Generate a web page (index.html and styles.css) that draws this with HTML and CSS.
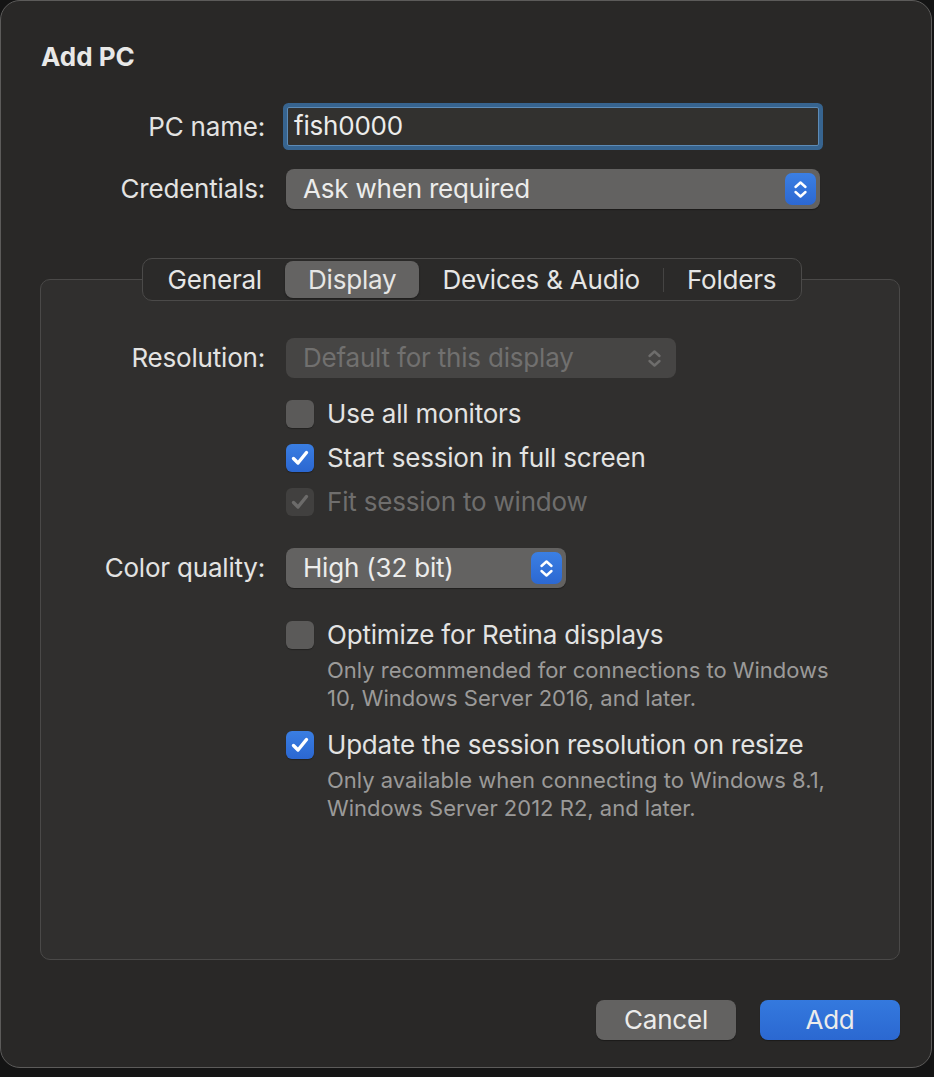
FILE: index.html
```html
<!DOCTYPE html>
<html lang="en">
<head>
  <meta charset="UTF-8">
  <meta name="viewport" content="width=device-width, initial-scale=1.0">
  <title>Add PC</title>
  <link rel="stylesheet" href="styles.css">
</head>
<body>
  <div class="window">
    <h1 class="title">Add PC</h1>

    <div class="top-form">
      <div class="row">
        <label class="row-label">PC name:</label>
        <div class="text-field">fish0000</div>
      </div>
      <div class="row">
        <label class="row-label">Credentials:</label>
        <div class="popup popup-credentials">
          <span>Ask when required</span>
          <span class="stepper">
            <svg width="31" height="31" viewBox="0 0 31 31"><path d="M10.5 13 L15.5 8.5 L20.5 13 M10.5 18 L15.5 22.5 L20.5 18" fill="none" stroke="#fff" stroke-width="2.4" stroke-linecap="round" stroke-linejoin="round"/></svg>
          </span>
        </div>
      </div>
    </div>

    <div class="tabs">
      <div class="segmented">
        <span class="segment">General</span>
        <span class="segment selected">Display</span>
        <span class="segment">Devices &amp; Audio</span>
        <span class="divider"></span>
        <span class="segment">Folders</span>
      </div>
    </div>

    <div class="tab-box">
      <div class="row">
        <label class="row-label">Resolution:</label>
        <div class="popup popup-resolution disabled">
          <span>Default for this display</span>
          <span class="stepper plain">
            <svg width="31" height="31" viewBox="0 0 31 31"><path d="M10.5 13 L15.5 8.5 L20.5 13 M10.5 18 L15.5 22.5 L20.5 18" fill="none" stroke="#6e6d6c" stroke-width="2.4" stroke-linecap="round" stroke-linejoin="round"/></svg>
          </span>
        </div>
      </div>

      <div class="check-group">
        <div class="check-row">
          <span class="checkbox"></span>
          <span>Use all monitors</span>
        </div>
        <div class="check-row">
          <span class="checkbox checked">
            <svg width="28" height="28" viewBox="0 0 28 28"><path d="M7.5 14.5 L12 19 L20.5 8.5" fill="none" stroke="#fff" stroke-width="3.4" stroke-linecap="round" stroke-linejoin="round"/></svg>
          </span>
          <span>Start session in full screen</span>
        </div>
        <div class="check-row disabled">
          <span class="checkbox checked-disabled">
            <svg width="28" height="28" viewBox="0 0 28 28"><path d="M7.5 14.5 L12 19 L20.5 8.5" fill="none" stroke="#6c6b6a" stroke-width="3.4" stroke-linecap="round" stroke-linejoin="round"/></svg>
          </span>
          <span>Fit session to window</span>
        </div>
      </div>

      <div class="row row-color">
        <label class="row-label">Color quality:</label>
        <div class="popup popup-color">
          <span>High (32 bit)</span>
          <span class="stepper">
            <svg width="31" height="31" viewBox="0 0 31 31"><path d="M10.5 13 L15.5 8.5 L20.5 13 M10.5 18 L15.5 22.5 L20.5 18" fill="none" stroke="#fff" stroke-width="2.4" stroke-linecap="round" stroke-linejoin="round"/></svg>
          </span>
        </div>
      </div>

      <div class="option">
        <div class="check-row">
          <span class="checkbox"></span>
          <span>Optimize for Retina displays</span>
        </div>
        <p class="option-note">Only recommended for connections to Windows<br>10, Windows Server 2016, and later.</p>
      </div>

      <div class="option option-update">
        <div class="check-row">
          <span class="checkbox checked">
            <svg width="28" height="28" viewBox="0 0 28 28"><path d="M7.5 14.5 L12 19 L20.5 8.5" fill="none" stroke="#fff" stroke-width="3.4" stroke-linecap="round" stroke-linejoin="round"/></svg>
          </span>
          <span>Update the session resolution on resize</span>
        </div>
        <p class="option-note">Only available when connecting to Windows 8.1,<br>Windows Server 2012 R2, and later.</p>
      </div>
    </div>

    <div class="buttons">
      <button class="button">Cancel</button>
      <button class="button primary">Add</button>
    </div>
  </div>
</body>
</html>
```

FILE: styles.css
```css
body {
  margin: 0;
  background-color: #141414;
  font-family: Inter, "Liberation Sans", Arial, sans-serif;
  font-size: 26px;
  letter-spacing: -0.2px;
  color: #e3e3e2;
}
.window {
  box-sizing: border-box;
  width: 932px;
  height: 1068px;
  padding-top: 41px;
  background-color: #292827;
  border: 1px solid #5c5b5a;
  border-radius: 20px;
}
.title {
  margin: 0 0 0 40px;
  font-size: 26px;
  line-height: 30px;
  font-weight: bold;
  letter-spacing: 0;
  color: #e8e8e7;
}
.top-form {
  margin-top: 35px;
}
.row {
  display: flex;
  align-items: center;
}
.row-label {
  width: 264px;
  margin-right: 21px;
  text-align: right;
  line-height: 38px;
}
.top-form .row + .row {
  margin-top: 23px;
}
.text-field {
  box-sizing: border-box;
  width: 532px;
  height: 39px;
  margin-left: 1px;
  padding-left: 6px;
  line-height: 35px;
  background-color: #32312f;
  border: 1px solid #5d8bb6;
  box-shadow: 0 0 0 4px #37648f;
  border-radius: 2px;
  color: #ececeb;
}
.popup {
  box-sizing: border-box;
  display: flex;
  align-items: center;
  justify-content: space-between;
  height: 40px;
  padding: 0 4px 0 17px;
  line-height: 36px;
  background-color: #636261;
  border-radius: 8px;
  box-shadow: 0 1px 1px rgba(0, 0, 0, 0.35);
  color: #ececeb;
}
.popup-credentials {
  width: 534px;
}
.popup-resolution {
  width: 390px;
}
.popup-color {
  width: 280px;
}
.popup.disabled {
  background-color: #464544;
  color: #71706f;
  box-shadow: none;
}
.stepper {
  display: flex;
  width: 31px;
  height: 32px;
  border-radius: 7px;
  align-items: center;
  justify-content: center;
  background: linear-gradient(#3b7fe3, #2c68d2);
}
.stepper.plain {
  background: none;
  margin-right: 2px;
}
.tabs {
  position: relative;
  z-index: 1;
  display: flex;
  justify-content: center;
  margin: 49px 29px -22px 41px;
}
.segmented {
  display: flex;
  align-items: center;
  height: 43px;
  box-sizing: border-box;
  padding: 0 2px;
  background-color: #2b2a29;
  border: 1px solid #4b4a49;
  border-radius: 10px;
}
.segment {
  padding: 0 23px;
  line-height: 37px;
  border-radius: 8px;
  color: #e6e6e5;
}
.segment.selected {
  background-color: #646362;
  box-shadow: 0 1px 2px rgba(0, 0, 0, 0.35);
}
.divider {
  width: 1px;
  height: 24px;
  background-color: #454443;
}
.tab-box {
  box-sizing: border-box;
  height: 681px;
  margin: 0 31px 0 39px;
  padding-top: 58px;
  background-color: #302f2e;
  border: 1px solid #4a4948;
  border-radius: 10px;
}
.tab-box .row-label {
  width: 224px;
}
.check-group {
  margin-top: 14px;
}
.check-row {
  display: flex;
  align-items: center;
  height: 44px;
  margin-left: 245px;
  line-height: 42px;
}
.checkbox {
  box-sizing: border-box;
  display: flex;
  width: 28px;
  height: 28px;
  margin-right: 13px;
  border-radius: 6px;
  background-color: #5b5a59;
  box-shadow: 0 1px 1px rgba(0, 0, 0, 0.3);
}
.checkbox.checked {
  background: linear-gradient(#3a7ee2, #2b67d1);
}
.checkbox.checked-disabled {
  background-color: #41403f;
  box-shadow: none;
}
.check-row.disabled {
  color: #6f6e6d;
}
.row-color {
  margin-top: 24px;
}
.option {
  margin-top: 25px;
}
.option-update {
  margin-top: 11px;
}
.option-note {
  margin: -1px 0 0 286px;
  font-size: 22px;
  line-height: 28px;
  letter-spacing: 0;
  color: #9b9a99;
}
.buttons {
  display: flex;
  justify-content: flex-end;
  gap: 24px;
  margin: 40px 31px 0 0;
}
.button {
  width: 140px;
  height: 40px;
  padding: 0 0 2px;
  font-family: inherit;
  font-size: 26px;
  letter-spacing: -0.2px;
  color: #ececeb;
  background-color: #636261;
  border: none;
  border-radius: 8px;
  box-shadow: 0 1px 1px rgba(0, 0, 0, 0.35);
}
.button.primary {
  background: linear-gradient(#3479de, #2b68d1);
}
```
